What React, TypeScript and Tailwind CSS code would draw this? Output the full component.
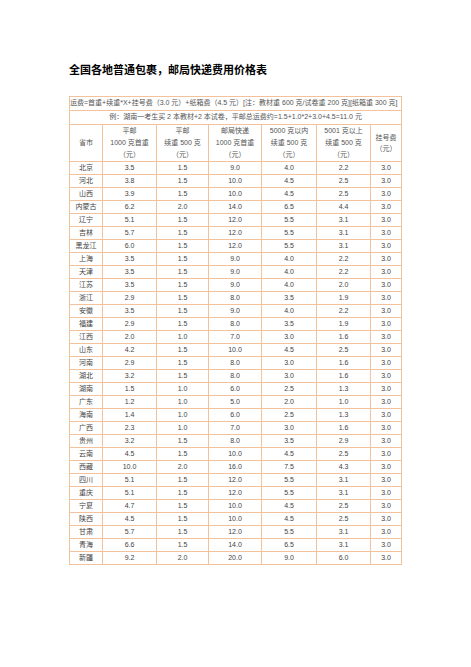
import React from "react";

const ROWS: [string, string, string, string, string, string, string][] = [
  ["北京", "3.5", "1.5", "9.0", "4.0", "2.2", "3.0"],
  ["河北", "3.8", "1.5", "10.0", "4.5", "2.5", "3.0"],
  ["山西", "3.9", "1.5", "10.0", "4.5", "2.5", "3.0"],
  ["内蒙古", "6.2", "2.0", "14.0", "6.5", "4.4", "3.0"],
  ["辽宁", "5.1", "1.5", "12.0", "5.5", "3.1", "3.0"],
  ["吉林", "5.7", "1.5", "12.0", "5.5", "3.1", "3.0"],
  ["黑龙江", "6.0", "1.5", "12.0", "5.5", "3.1", "3.0"],
  ["上海", "3.5", "1.5", "9.0", "4.0", "2.2", "3.0"],
  ["天津", "3.5", "1.5", "9.0", "4.0", "2.2", "3.0"],
  ["江苏", "3.5", "1.5", "9.0", "4.0", "2.0", "3.0"],
  ["浙江", "2.9", "1.5", "8.0", "3.5", "1.9", "3.0"],
  ["安徽", "3.5", "1.5", "9.0", "4.0", "2.2", "3.0"],
  ["福建", "2.9", "1.5", "8.0", "3.5", "1.9", "3.0"],
  ["江西", "2.0", "1.0", "7.0", "3.0", "1.6", "3.0"],
  ["山东", "4.2", "1.5", "10.0", "4.5", "2.5", "3.0"],
  ["河南", "2.9", "1.5", "8.0", "3.0", "1.6", "3.0"],
  ["湖北", "3.2", "1.5", "8.0", "3.0", "1.6", "3.0"],
  ["湖南", "1.5", "1.0", "6.0", "2.5", "1.3", "3.0"],
  ["广东", "1.2", "1.0", "5.0", "2.0", "1.0", "3.0"],
  ["海南", "1.4", "1.0", "6.0", "2.5", "1.3", "3.0"],
  ["广西", "2.3", "1.0", "7.0", "3.0", "1.6", "3.0"],
  ["贵州", "3.2", "1.5", "8.0", "3.5", "2.9", "3.0"],
  ["云南", "4.5", "1.5", "10.0", "4.5", "2.5", "3.0"],
  ["西藏", "10.0", "2.0", "16.0", "7.5", "4.3", "3.0"],
  ["四川", "5.1", "1.5", "12.0", "5.5", "3.1", "3.0"],
  ["重庆", "5.1", "1.5", "12.0", "5.5", "3.1", "3.0"],
  ["宁夏", "4.7", "1.5", "10.0", "4.5", "2.5", "3.0"],
  ["陕西", "4.5", "1.5", "10.0", "4.5", "2.5", "3.0"],
  ["甘肃", "5.7", "1.5", "12.0", "5.5", "3.1", "3.0"],
  ["青海", "6.6", "1.5", "14.0", "6.5", "3.1", "3.0"],
  ["新疆", "9.2", "2.0", "20.0", "9.0", "6.0", "3.0"],
];

const HEADERS: string[][] = [
  ["平邮", "1000 克首重", "（元）"],
  ["平邮", "续重 500 克", "（元）"],
  ["邮局快递", "1000 克首重", "（元）"],
  ["5000 克以内", "续重 500 克", "（元）"],
  ["5001 克以上", "续重 500 克", "（元）"],
];

const cell = "border border-[#f2c29c] p-0 text-center align-middle";

export default function App() {
  return (
    <div
      className="min-h-[667px] w-[471px] bg-white pl-[69px] pt-[63px] text-[#555]"
      style={{ fontFamily: '"Liberation Sans", "Noto Sans CJK SC", sans-serif' }}
    >
      <h1 className="text-[11px] font-bold leading-[14px] text-black">
        全国各地普通包裹，邮局快递费用价格表
      </h1>

      <table className="mt-[19px] w-[332px] table-fixed border-collapse text-[7px]">
        <colgroup>
          <col className="w-[33px]" />
          <col className="w-[54px]" />
          <col className="w-[52px]" />
          <col className="w-[53px]" />
          <col className="w-[55px]" />
          <col className="w-[54px]" />
          <col className="w-[31px]" />
        </colgroup>
        <tbody>
          <tr className="h-[14px]">
            <td colSpan={7} className={`${cell} overflow-hidden whitespace-nowrap text-left`}>
              运费=首重+续重*X+挂号费（3.0 元）+纸箱费（4.5 元）[注：教材重 600 克/试卷重 200 克][纸箱重 300 克]
            </td>
          </tr>
          <tr className="h-[14px]">
            <td colSpan={7} className={`${cell} whitespace-nowrap`}>
              例：湖南一考生买 2 本教材+2 本试卷，平邮总运费约=1.5+1.0*2+3.0+4.5=11.0 元
            </td>
          </tr>
          <tr className="h-[37px]">
            <td className={cell}>省市</td>
            {HEADERS.map((h, i) => (
              <td key={i} className={`${cell} leading-[12px]`}>
                {h.map((line, j) => (
                  <div key={j}>{line}</div>
                ))}
              </td>
            ))}
            <td className={`${cell} leading-[11px]`}>
              <div>挂号费</div>
              <div>（元）</div>
            </td>
          </tr>
          {ROWS.map((r) => (
            <tr key={r[0]} className="h-[13px]">
              {r.map((v, i) => (
                <td key={i} className={`${cell} leading-[12px] text-[#444]`}>
                  {v}
                </td>
              ))}
            </tr>
          ))}
        </tbody>
      </table>
    </div>
  );
}
